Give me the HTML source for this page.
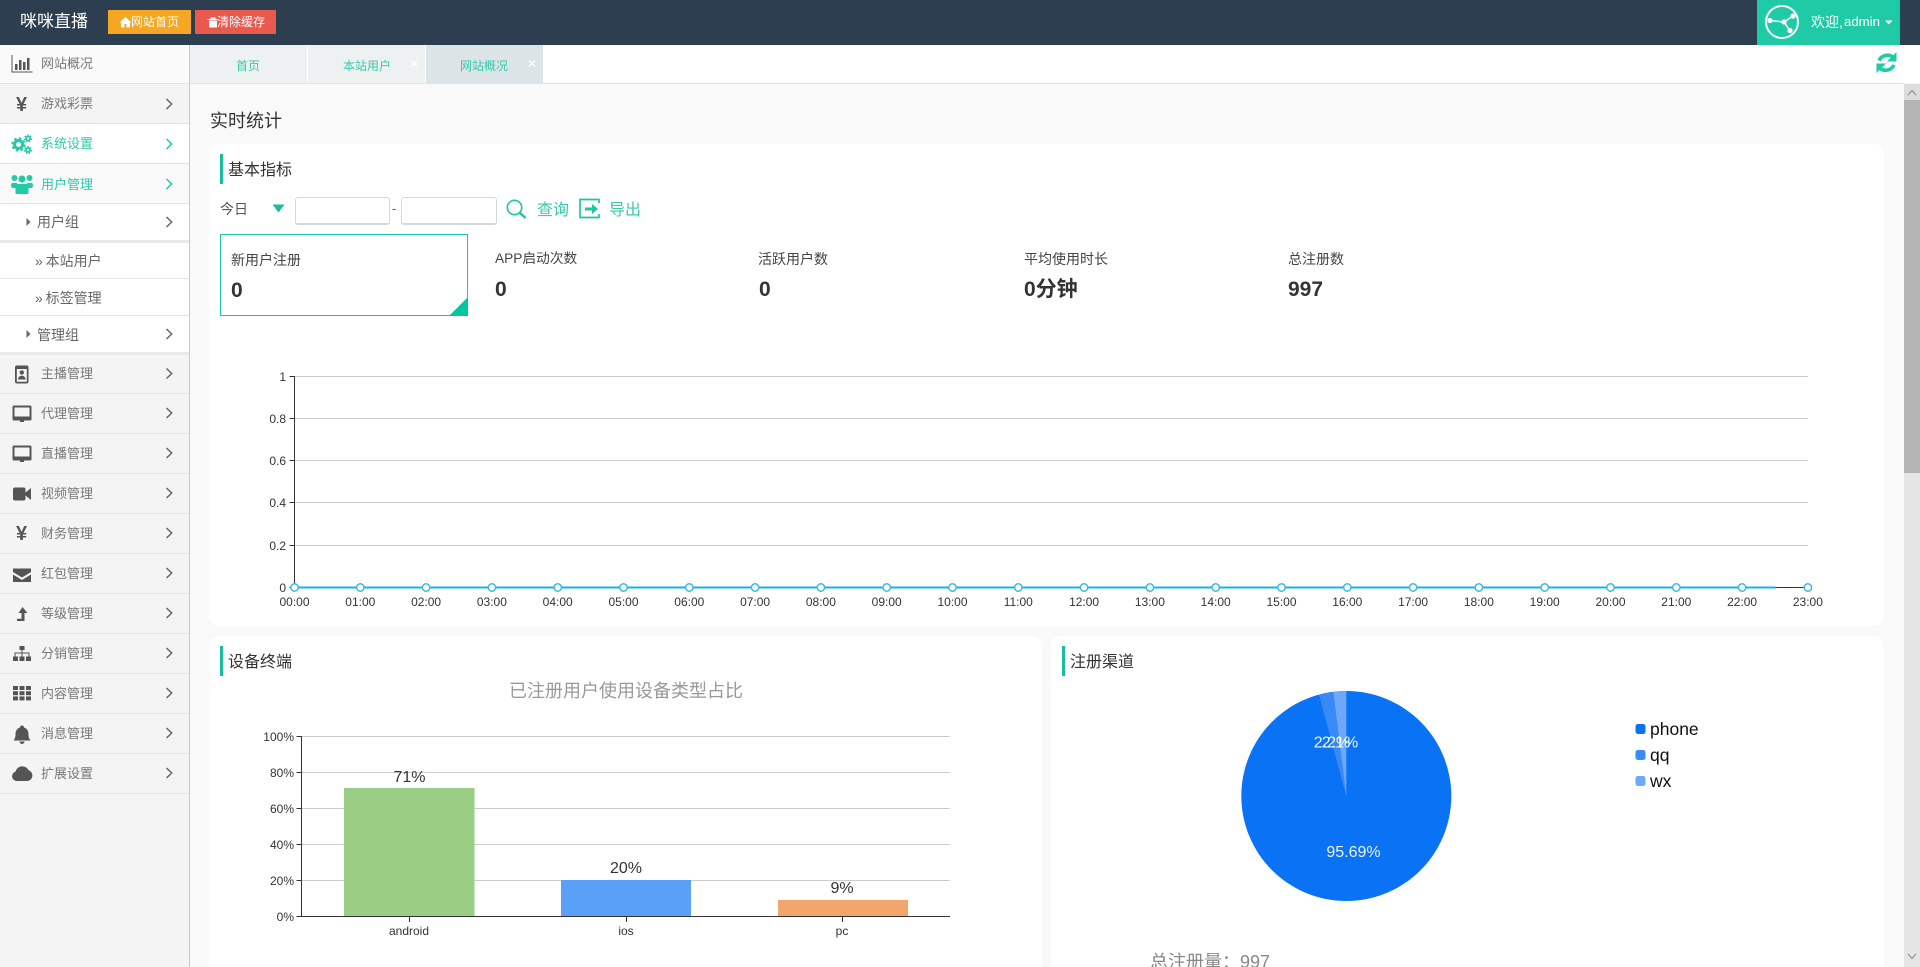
<!DOCTYPE html>
<html lang="zh">
<head>
<meta charset="utf-8">
<title>咪咪直播</title>
<style>
html,body{margin:0;padding:0;width:1920px;height:967px;overflow:hidden;background:#f9f9f9;font-family:"Liberation Sans","Noto Sans CJK SC",sans-serif;color:#333}
#w{position:relative;width:1920px;height:967px;overflow:hidden}
.b{position:absolute;box-sizing:border-box}
.t{position:absolute;height:20px;line-height:20px;white-space:nowrap}
.g{color:#777;font-size:13px}
.s{color:#666;font-size:14px}
.a{color:#2bcbaa}
.tab{color:#35c9aa;font-size:12px;width:60px;text-align:center}
.ln{position:absolute;left:0;width:189px;height:1px;background:#e3e3e3}
svg text{font-family:"Liberation Sans","Noto Sans CJK SC",sans-serif}
</style>
</head>
<body>
<div id="w">
<!-- backgrounds -->
<div class="b" style="left:0;top:0;width:1920px;height:45px;background:#2c3e50"></div>
<div class="b" style="left:108px;top:10px;width:83px;height:24px;background:#f5a623"></div>
<div class="b" style="left:195px;top:10px;width:81px;height:24px;background:#e9594d"></div>
<div class="b" style="left:1757px;top:0;width:143px;height:45px;background:#1fcaa6"></div>

<!-- sidebar -->
<div class="b" style="left:0;top:45px;width:189px;height:922px;background:#f4f4f4"></div>
<div class="b" style="left:189px;top:45px;width:1px;height:922px;background:#c9c9c9"></div>
<div class="b" style="left:0;top:45px;width:189px;height:39px;background:#fafafa"></div>
<div class="b" style="left:0;top:124px;width:189px;height:40px;background:#fff"></div>
<div class="b" style="left:0;top:164px;width:189px;height:40px;background:#f9f9f9"></div>
<div class="b" style="left:0;top:204px;width:189px;height:150px;background:#fff"></div>
<div class="ln" style="top:83px"></div><div class="ln" style="top:123px"></div><div class="ln" style="top:163px"></div><div class="ln" style="top:203px"></div>
<div class="ln" style="top:240px;height:3px;background:#e9e9e9"></div>
<div class="ln" style="top:278px"></div><div class="ln" style="top:315px"></div>
<div class="ln" style="top:352px;height:3px;background:#e9e9e9"></div>
<div class="ln" style="top:393px"></div><div class="ln" style="top:433px"></div><div class="ln" style="top:473px"></div><div class="ln" style="top:513px"></div><div class="ln" style="top:553px"></div><div class="ln" style="top:593px"></div><div class="ln" style="top:633px"></div><div class="ln" style="top:673px"></div><div class="ln" style="top:713px"></div><div class="ln" style="top:753px"></div><div class="ln" style="top:793px"></div>

<!-- tabs -->
<div class="b" style="left:190px;top:45px;width:1730px;height:38px;background:#fff"></div>
<div class="b" style="left:190px;top:45px;width:117px;height:38px;background:#eef1f2"></div>
<div class="b" style="left:308px;top:45px;width:117px;height:38px;background:#eef1f2"></div>
<div class="b" style="left:426px;top:45px;width:117px;height:38px;background:#dde4e7"></div>
<div class="b" style="left:190px;top:83px;width:1714px;height:1px;background:#e2e2e2"></div>

<!-- cards -->
<div class="b" style="left:209px;top:144px;width:1675px;height:482px;background:#fff;border-radius:10px"></div>
<div class="b" style="left:209px;top:636px;width:833px;height:345px;background:#fff;border-radius:10px"></div>
<div class="b" style="left:1051px;top:636px;width:833px;height:345px;background:#fff;border-radius:10px"></div>
<div class="b" style="left:220px;top:154px;width:3px;height:30px;background:#1abc9c"></div>
<div class="b" style="left:220px;top:646px;width:3px;height:30px;background:#1abc9c"></div>
<div class="b" style="left:1062px;top:646px;width:3px;height:30px;background:#1abc9c"></div>

<!-- inputs and stat box -->
<div class="b" style="left:295px;top:197px;width:95px;height:28px;border:1px solid #d3d9df;border-bottom-width:2px;border-radius:3px;background:#fff"></div>
<div class="b" style="left:401px;top:197px;width:96px;height:28px;border:1px solid #d3d9df;border-bottom-width:2px;border-radius:3px;background:#fff"></div>
<div class="b" style="left:220px;top:234px;width:248px;height:82px;border:1px solid #1fc4a4;background:#fff"></div>

<!-- scrollbar -->
<div class="b" style="left:1904px;top:84px;width:16px;height:883px;background:#e5e5e5"></div>
<div class="b" style="left:1904px;top:84px;width:16px;height:16px;background:#dcdcdc"></div>
<div class="b" style="left:1904px;top:100px;width:16px;height:373px;background:#b4b4b4"></div>

<!-- graphics -->
<svg class="b" style="left:0;top:0" width="1920" height="967" viewBox="0 0 1920 967" xmlns="http://www.w3.org/2000/svg">
  <!-- header icons -->
  <path d="M119.500 22.500l6-5.500 6 5.500h-1.500v5h-3.500v-3.500h-2v3.500H121v-5z" fill="#fff"/>
  <path d="M209 20.500h8v7h-8zM207.500 19h11v1h-11zM210.500 17.500h5v1.500h-5z" fill="#fff"/>
  <g fill="none" stroke="#fff" stroke-width="2">
    <circle cx="1782" cy="22" r="16"/>
    <path d="M1770 20.500L1784 22L1793 16M1784 22L1790 30.500" stroke-width="1.500"/>
  </g>
  <g fill="#fff"><circle cx="1770" cy="20.500" r="2.600"/><circle cx="1784" cy="22" r="2.600"/><circle cx="1790" cy="30.500" r="2.600"/><circle cx="1793" cy="16" r="2.600"/></g>
  <path d="M1885 20.500h7.500l-3.750 4z" fill="#fff"/>
  <!-- refresh -->
  <g fill="none" stroke="#1fcaa6" stroke-width="3.600">
    <path d="M1879 60.500A9.500 9.500 0 0 1 1893 57"/>
    <path d="M1894 65A9.500 9.500 0 0 1 1880 68.500"/>
  </g>
  <path d="M1896.500 52v9.500h-9.500zM1876.500 73v-9.500h9.500z" fill="#1fcaa6"/>

  <!-- sidebar icons -->
  <g fill="#555" stroke="none">
    <path d="M11.500 55h1v16.500h20v1h-21z"/><rect x="15" y="64" width="2.500" height="6"/><rect x="19" y="60" width="2.500" height="10"/><rect x="23" y="62" width="2.500" height="8"/><rect x="27" y="58" width="2.500" height="12"/>
    <!-- badge -->
    <path fill-rule="evenodd" d="M17 365.500h9.500a2 2 0 0 1 2 2v14a2 2 0 0 1-2 2H17a2 2 0 0 1-2-2v-14a2 2 0 0 1 2-2zM16.800 369v12.800h10V369z"/>
    <circle cx="21.800" cy="372.500" r="2.200"/><path d="M18 379.500c0-5 7.600-5 7.600 0z"/>
    <!-- monitors -->
    <path fill-rule="evenodd" d="M14 405.500h16a1.500 1.500 0 0 1 1.500 1.500v12a1.500 1.500 0 0 1-1.500 1.500H24v1.500h-4v-1.500h-6a1.500 1.500 0 0 1-1.500-1.500V407a1.500 1.500 0 0 1 1.500-1.500zM14.500 407.500v9h15v-9z"/>
    <path fill-rule="evenodd" d="M14 445.500h16a1.500 1.500 0 0 1 1.500 1.500v12a1.500 1.500 0 0 1-1.500 1.500H24v1.500h-4v-1.500h-6a1.500 1.500 0 0 1-1.500-1.500V447a1.500 1.500 0 0 1 1.500-1.500zM14.500 447.500v9h15v-9z"/>
    <!-- video -->
    <rect x="13" y="487.500" width="12.500" height="13" rx="2"/><path d="M25.500 492.500l5.500-4.500v12l-5.500-4.500z"/>
    <!-- envelope -->
    <path d="M13 568.500h18v3.500l-9 5.500-9-5.500z"/><path d="M13 574.500l9 5.500 9-5.500v7.500H13z"/>
    <!-- level up -->
    <path d="M22.500 607l5 6h-3v8H17v-2.200h4.500V613h-3z"/>
    <!-- sitemap -->
    <rect x="19.500" y="646" width="5" height="4"/><rect x="13" y="656.500" width="5" height="4.500"/><rect x="19.500" y="656.500" width="5" height="4.500"/><rect x="26" y="656.500" width="5" height="4.500"/>
    <path d="M21.500 650h1v2.500h7v4h-1v-3h-6v3h-1v-3h-6v3h-1v-4h7z"/>
    <!-- grid -->
    <rect x="13" y="686" width="5" height="4"/><rect x="19.500" y="686" width="5" height="4"/><rect x="26" y="686" width="5" height="4"/>
    <rect x="13" y="691.200" width="5" height="4"/><rect x="19.500" y="691.200" width="5" height="4"/><rect x="26" y="691.200" width="5" height="4"/>
    <rect x="13" y="696.400" width="5" height="4"/><rect x="19.500" y="696.400" width="5" height="4"/><rect x="26" y="696.400" width="5" height="4"/>
    <!-- bell -->
    <path d="M22 725.500a2 2 0 0 1 2 2c3.500 1 4.500 4 4.500 7 0 3.500 1 4.500 2 6H13.500c1-1.500 2-2.500 2-6 0-3 1-6 4.500-7a2 2 0 0 1 2-2z"/><path d="M19.500 741.500h5a2.500 2.500 0 0 1-5 0z"/>
    <!-- cloud -->
    <path d="M17 781a4.800 4.800 0 0 1-1.500-9.400 7 7 0 0 1 13-1.500 5.600 5.600 0 0 1-1 10.900z"/>
  </g>
  <g fill="#21cba7">
    <path d="M14.500 175a3 3 0 1 1 0 6 3 3 0 0 1 0-6zM29.500 175a3 3 0 1 1 0 6 3 3 0 0 1 0-6zM22 175.500a3.500 3.500 0 1 1 0 7 3.500 3.500 0 0 1 0-7z"/>
    <path d="M12 183h5c.5 3 0 4-1 5h-4c-1-1-1.500-4 0-5zM27 183h5c1.500 1 1 4 0 5h-4c-1-1-1.500-2 -1-5z"/>
    <path d="M17.500 184h9c2 1 2 3 2 5v4c0 .5-.5 1-1 1h-11c-.5 0-1-.5-1-1v-4c0-2 0-4 2-5z"/>
  </g>
  <g fill="none" stroke="#21cba7">
    <circle cx="18.500" cy="144.500" r="4" stroke-width="3"/>
    <circle cx="18.500" cy="144.500" r="6.200" stroke-width="2" stroke-dasharray="2.500 2.400"/>
    <circle cx="28" cy="138.500" r="2" stroke-width="1.700"/>
    <circle cx="28" cy="138.500" r="3.400" stroke-width="1.500" stroke-dasharray="1.500 1.500"/>
    <circle cx="28" cy="150" r="2" stroke-width="1.700"/>
    <circle cx="28" cy="150" r="3.400" stroke-width="1.500" stroke-dasharray="1.500 1.500"/>
  </g>
  <!-- chevrons -->
  <g fill="none" stroke="#666" stroke-width="1.500">
    <path d="M166.500 99l5.200 5-5.200 5M166.500 217l5.200 5-5.200 5M166.500 329l5.200 5-5.200 5M166.500 368.500l5.200 5-5.200 5M166.500 408l5.200 5-5.200 5M166.500 448l5.200 5-5.200 5M166.500 488l5.200 5-5.200 5M166.500 528l5.200 5-5.200 5M166.500 568l5.200 5-5.200 5M166.500 608l5.200 5-5.200 5M166.500 648l5.200 5-5.200 5M166.500 688l5.200 5-5.200 5M166.500 728l5.200 5-5.200 5M166.500 768l5.200 5-5.200 5"/>
    <path d="M166.500 139l5.200 5-5.200 5M166.500 179l5.200 5-5.200 5" stroke="#21cba7"/>
  </g>
  <path d="M26.500 218l4 4-4 4zM26.500 330l4 4-4 4z" fill="#666"/>

  <!-- filter icons -->
  <path d="M272.500 204.500h12l-6 8z" fill="#1abc9c"/>
  <g fill="none" stroke="#21c4a2" stroke-width="1.600">
    <circle cx="514.500" cy="207.500" r="7.200"/>
    <path d="M520 213l5.500 5" stroke-width="2.400"/>
    <path d="M599 203v-3.500h-19v18h19V214" stroke-width="1.700"/>
    <path d="M585 209h9" stroke-width="3"/>
  </g>
  <path d="M592 204l6 5-6 5z" fill="#21c4a2"/>
  <path d="M468 297v19h-19z" fill="#00c9a0"/>

  <!-- line chart -->
  <g stroke="#ccc" stroke-width="1" fill="none">
    <path d="M294.500 376.500H1808M294.500 418.500H1808M294.500 460.500H1808M294.500 502.500H1808M294.500 545.500H1808"/>
  </g>
  <path d="M294.500 376V587.500M289.500 376.500h5M289.500 418.500h5M289.500 460.500h5M289.500 502.500h5M289.500 545.500h5M289.500 587.500h5M294 587.500H1808" stroke="#333" fill="none"/>
  <path d="M294.500 587.500H1775.500" stroke="#18b4e0" stroke-width="2" fill="none"/>
  <g fill="#fff" stroke="#3bbbe0" stroke-width="1.500">
    <circle cx="294.500" cy="587.500" r="3.700"/><circle cx="360.300" cy="587.500" r="3.700"/><circle cx="426.100" cy="587.500" r="3.700"/><circle cx="491.900" cy="587.500" r="3.700"/><circle cx="557.700" cy="587.500" r="3.700"/><circle cx="623.500" cy="587.500" r="3.700"/><circle cx="689.300" cy="587.500" r="3.700"/><circle cx="755.100" cy="587.500" r="3.700"/><circle cx="820.900" cy="587.500" r="3.700"/><circle cx="886.700" cy="587.500" r="3.700"/><circle cx="952.500" cy="587.500" r="3.700"/><circle cx="1018.300" cy="587.500" r="3.700"/><circle cx="1084.100" cy="587.500" r="3.700"/><circle cx="1149.900" cy="587.500" r="3.700"/><circle cx="1215.700" cy="587.500" r="3.700"/><circle cx="1281.500" cy="587.500" r="3.700"/><circle cx="1347.300" cy="587.500" r="3.700"/><circle cx="1413.100" cy="587.500" r="3.700"/><circle cx="1478.900" cy="587.500" r="3.700"/><circle cx="1544.700" cy="587.500" r="3.700"/><circle cx="1610.500" cy="587.500" r="3.700"/><circle cx="1676.300" cy="587.500" r="3.700"/><circle cx="1742.100" cy="587.500" r="3.700"/><circle cx="1807.900" cy="587.500" r="3.700"/>
  </g>
  <g font-size="12" fill="#333" text-anchor="end">
    <text x="286" y="381">1</text><text x="286" y="423">0.8</text><text x="286" y="465">0.6</text><text x="286" y="507">0.4</text><text x="286" y="550">0.2</text><text x="286" y="592">0</text>
  </g>
  <g font-size="12" fill="#333" text-anchor="middle">
    <text x="294.500" y="606">00:00</text><text x="360.300" y="606">01:00</text><text x="426.100" y="606">02:00</text><text x="491.900" y="606">03:00</text><text x="557.700" y="606">04:00</text><text x="623.500" y="606">05:00</text><text x="689.300" y="606">06:00</text><text x="755.100" y="606">07:00</text><text x="820.900" y="606">08:00</text><text x="886.700" y="606">09:00</text><text x="952.500" y="606">10:00</text><text x="1018.300" y="606">11:00</text><text x="1084.100" y="606">12:00</text><text x="1149.900" y="606">13:00</text><text x="1215.700" y="606">14:00</text><text x="1281.500" y="606">15:00</text><text x="1347.300" y="606">16:00</text><text x="1413.100" y="606">17:00</text><text x="1478.900" y="606">18:00</text><text x="1544.700" y="606">19:00</text><text x="1610.500" y="606">20:00</text><text x="1676.300" y="606">21:00</text><text x="1742.100" y="606">22:00</text><text x="1807.900" y="606">23:00</text>
  </g>

  <!-- bar chart -->
  <text x="626" y="697" font-size="18" fill="#999" text-anchor="middle">已注册用户使用设备类型占比</text>
  <path d="M301.500 736.500H950M301.500 772.500H950M301.500 808.500H950M301.500 844.500H950M301.500 880.500H950" stroke="#ccc" fill="none"/>
  <rect x="344" y="788" width="130.500" height="128.500" fill="#9ace85"/>
  <rect x="561" y="880" width="130" height="36.500" fill="#5ba0f8"/>
  <rect x="778" y="900" width="130" height="16.500" fill="#f3a66b"/>
  <path d="M301.500 736V917M296.500 736.500h5M296.500 772.500h5M296.500 808.500h5M296.500 844.500h5M296.500 880.500h5M296.500 916.500h5M301 916.500H950M409.500 917v5M626.500 917v5M842.500 917v5" stroke="#333" fill="none"/>
  <g font-size="12" fill="#333" text-anchor="end">
    <text x="294" y="741">100%</text><text x="294" y="777">80%</text><text x="294" y="813">60%</text><text x="294" y="849">40%</text><text x="294" y="885">20%</text><text x="294" y="921">0%</text>
  </g>
  <g font-size="12" fill="#333" text-anchor="middle">
    <text x="409" y="935">android</text><text x="626" y="935">ios</text><text x="842" y="935">pc</text>
  </g>
  <g font-size="16" fill="#333" text-anchor="middle">
    <text x="409.500" y="782">71%</text><text x="626" y="873">20%</text><text x="842" y="893">9%</text>
  </g>

  <!-- pie -->
  <circle cx="1346.300" cy="796" r="105" fill="#0a72f5"/>
  <path d="M1346.300 796L1319 694.600A105 105 0 0 1 1333.300 691.800z" fill="#3a8af5"/>
  <path d="M1346.300 796L1333.300 691.800A105 105 0 0 1 1346.300 691z" fill="#6ea8f8"/>
  <g font-size="16" fill="#fff" text-anchor="middle" fill-opacity=".92">
    <text x="1332" y="747.500">2.2%</text><text x="1340" y="747.500">2.1%</text><text x="1353.500" y="857">95.69%</text>
  </g>
  <rect x="1635.500" y="724" width="10" height="10" rx="2.500" fill="#0a72f5"/>
  <rect x="1635.500" y="750" width="10" height="10" rx="2.500" fill="#3a8af5"/>
  <rect x="1635.500" y="776" width="10" height="10" rx="2.500" fill="#6ea8f8"/>
  <g font-size="17.500" fill="#111">
    <text x="1650" y="735">phone</text><text x="1650" y="761">qq</text><text x="1650" y="787">wx</text>
  </g>

  <!-- scroll arrows -->
  <path d="M1908 95l4-4.500 4 4.500M1908 954l4 4.500 4-4.500" fill="none" stroke="#888" stroke-width="1"/>
</svg>

<!-- header text -->
<div class="t" style="left:20px;top:12px;font-size:17px;color:#fff">咪咪直播</div>
<div class="t" style="left:131px;top:12px;font-size:12px;color:#fff">网站首页</div>
<div class="t" style="left:217px;top:12px;font-size:12px;color:#fff">清除缓存</div>
<div class="t" style="left:1811px;top:12px;font-size:14px;color:#fff">欢迎,</div>
<div class="t" style="left:1844px;top:12px;font-size:13.200px;color:#fff">admin</div>

<!-- sidebar text -->
<div class="t g" style="left:41px;top:54px">网站概况</div>
<div class="t g" style="left:41px;top:94px">游戏彩票</div>
<div class="t g a" style="left:41px;top:134px">系统设置</div>
<div class="t g a" style="left:41px;top:175px">用户管理</div>
<div class="t s" style="left:37px;top:212px">用户组</div>
<div class="t s" style="left:35px;top:251px">»&#8201;本站用户</div>
<div class="t s" style="left:35px;top:288px">»&#8201;标签管理</div>
<div class="t s" style="left:37px;top:325px">管理组</div>
<div class="t g" style="left:41px;top:364px">主播管理</div>
<div class="t g" style="left:41px;top:404px">代理管理</div>
<div class="t g" style="left:41px;top:444px">直播管理</div>
<div class="t g" style="left:41px;top:484px">视频管理</div>
<div class="t g" style="left:41px;top:524px">财务管理</div>
<div class="t g" style="left:41px;top:564px">红包管理</div>
<div class="t g" style="left:41px;top:604px">等级管理</div>
<div class="t g" style="left:41px;top:644px">分销管理</div>
<div class="t g" style="left:41px;top:684px">内容管理</div>
<div class="t g" style="left:41px;top:724px">消息管理</div>
<div class="t g" style="left:41px;top:764px">扩展设置</div>
<div class="t" style="left:16px;top:95px;font-size:20px;font-weight:bold;color:#555">¥</div>
<div class="t" style="left:16px;top:524px;font-size:20px;font-weight:bold;color:#555">¥</div>

<!-- tabs text -->
<div class="t tab" style="left:218px;top:56px">首页</div>
<div class="t tab" style="left:337px;top:56px">本站用户</div>
<div class="t tab" style="left:454px;top:56px">网站概况</div>
<div class="t" style="left:409px;top:54px;font-size:12px;color:#fff">✕</div>
<div class="t" style="left:527px;top:54px;font-size:12px;color:#fff">✕</div>

<!-- content text -->
<div class="t" style="left:210px;top:111px;font-size:18px;color:#333">实时统计</div>
<div class="t" style="left:228px;top:161px;font-size:16px;color:#333">基本指标</div>
<div class="t" style="left:228px;top:653px;font-size:16px;color:#333">设备终端</div>
<div class="t" style="left:1070px;top:653px;font-size:16px;color:#333">注册渠道</div>
<div class="t" style="left:220px;top:199px;font-size:14px;color:#555">今日</div>
<div class="t" style="left:392px;top:199px;font-size:13px;color:#555">-</div>
<div class="t" style="left:537px;top:201px;font-size:16px;color:#3cc9ab">查询</div>
<div class="t" style="left:609px;top:201px;font-size:16px;color:#3cc9ab">导出</div>

<div class="t" style="left:231px;top:250px;font-size:14px;color:#444">新用户注册</div>
<div class="t" style="left:495px;top:249px;font-size:13.700px;color:#444">APP启动次数</div>
<div class="t" style="left:758px;top:249px;font-size:14px;color:#444">活跃用户数</div>
<div class="t" style="left:1024px;top:249px;font-size:14px;color:#444">平均使用时长</div>
<div class="t" style="left:1288px;top:249px;font-size:14px;color:#444">总注册数</div>
<div class="t" style="left:231px;top:281px;font-size:21px;font-weight:bold;color:#333">0</div>
<div class="t" style="left:495px;top:280px;font-size:21px;font-weight:bold;color:#333">0</div>
<div class="t" style="left:759px;top:280px;font-size:21px;font-weight:bold;color:#333">0</div>
<div class="t" style="left:1024px;top:280px;font-size:21px;font-weight:bold;color:#333">0分钟</div>
<div class="t" style="left:1288px;top:280px;font-size:21px;font-weight:bold;color:#333">997</div>

<div class="t" style="left:1150px;top:950px;font-size:18px;height:24px;line-height:24px;color:#888">总注册量：997</div>
</div>
</body>
</html>
